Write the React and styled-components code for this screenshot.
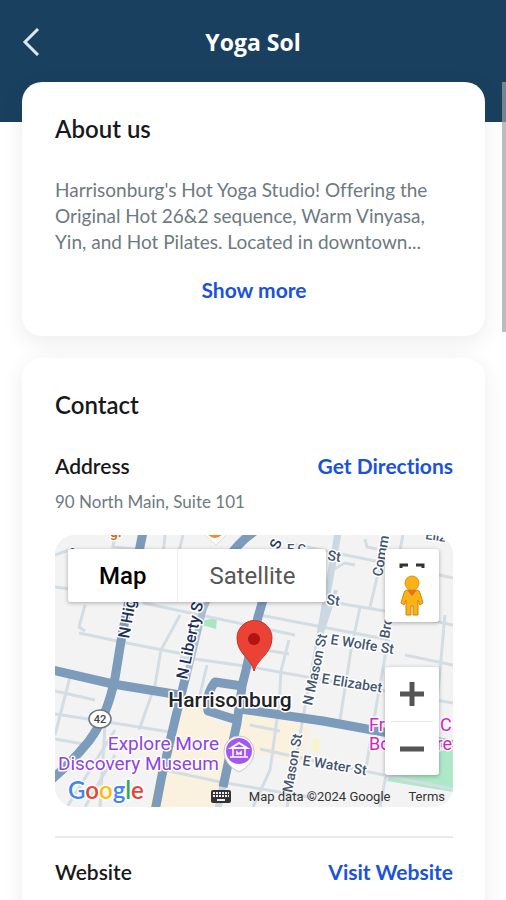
import React from 'react'
import styled, { createGlobalStyle } from 'styled-components'

const GlobalStyle = createGlobalStyle`
  * {
    box-sizing: border-box;
  }
  body {
    margin: 0;
    background: #fff;
    font-family: Lato, 'Open Sans', sans-serif;
    font-variant-ligatures: none;
  }
  button {
    border: 0;
    padding: 0;
    background: none;
    font-family: inherit;
    cursor: pointer;
  }
  h1, h2, h3, p {
    margin: 0;
  }
`

const Screen = styled.div`
  height: 100vh;
  overflow: hidden;
`

const Header = styled.header`
  display: grid;
  grid-template-columns: 40px 1fr 40px;
  align-items: center;
  height: 122px;
  padding: 0 11px 38px;
  background: #1a4060;
`

const BackButton = styled.button`
  display: flex;
  justify-content: center;
  color: #dce6ee;
`

const Title = styled.h1`
  font-family: 'Open Sans', sans-serif;
  font-size: 23px;
  font-weight: 700;
  line-height: 32px;
  text-align: center;
  color: #fff;
`

const Main = styled.main`
  display: flex;
  flex-direction: column;
  gap: 22px;
  margin-top: -40px;
  padding: 0 21px 0 22px;
`

const Card = styled.section`
  padding: 31px 32px 33px 33px;
  border-radius: 20px;
  background: #fff;
  box-shadow: 0 6px 22px rgba(40, 40, 70, 0.09);
`

const CardTitle = styled.h2`
  margin-bottom: 32px;
  font-size: 24px;
  font-weight: 600;
  line-height: 32px;
  color: #17191b;
`

const Description = styled.p`
  margin-bottom: 22px;
  font-size: 19px;
  line-height: 26px;
  color: #6d7a80;
`

const ShowMore = styled.button`
  display: block;
  margin: 0 auto;
  font-size: 21px;
  font-weight: 700;
  line-height: 26px;
  color: #1a52dc;
`

const Row = styled.div`
  display: flex;
  justify-content: space-between;
  font-size: 21px;
  line-height: 26px;
`

const RowTitle = styled.h3`
  font-size: 21px;
  font-weight: 600;
  color: #17191b;
`

const RowLink = styled.a`
  font-weight: 700;
  color: #1a52dc;
  text-decoration: none;
`

const AddressText = styled.p`
  margin: 11px 0 21px;
  font-size: 17px;
  line-height: 24px;
  color: #6d7a80;
`

const Divider = styled.hr`
  height: 2px;
  margin: 29px 0 21px;
  border: 0;
  background: #e9eaec;
`

const ScrollThumb = styled.div`
  position: fixed;
  top: 82px;
  right: 0;
  width: 4px;
  height: 250px;
  background: rgba(160, 160, 160, 0.7);
`

/* map */

const MapBox = styled.div`
  position: relative;
  height: 272px;
  overflow: hidden;
  border-radius: 20px;
  background: #f4f3f4;
  font-family: Roboto, sans-serif;
`

const MapCanvas = styled.svg`
  display: block;
  width: 100%;
  height: 100%;
`

const MapTypes = styled.div`
  position: absolute;
  top: 14px;
  left: 13px;
  display: flex;
  border-radius: 3px;
  background: #fff;
  box-shadow: 0 1px 4px rgba(0, 0, 0, 0.3);
`

const MapType = styled.button`
  height: 53px;
  padding: 0 31px;
  font-size: 24px;
  font-weight: ${props => props.$active ? 500 : 400};
  color: ${props => props.$active ? '#000' : '#565656'};
  & + & {
    border-left: 1px solid #eee;
  }
`

const Controls = styled.div`
  position: absolute;
  top: 14px;
  right: 14px;
  bottom: 32px;
  display: flex;
  flex-direction: column;
  justify-content: space-between;
`

const ControlGroup = styled.div`
  display: flex;
  flex-direction: column;
  align-items: center;
  width: 54px;
  border-radius: 3px;
  background: #fff;
  box-shadow: 0 1px 4px rgba(0, 0, 0, 0.3);
`

const Control = styled.button`
  display: flex;
  align-items: center;
  justify-content: center;
  width: 42px;
  height: ${props => props.$height || 54}px;
  border-top: ${props => props.$line ? '1px solid #e6e6e6' : '0'};
`

const MapFooter = styled.div`
  position: absolute;
  left: 13px;
  right: 8px;
  bottom: 0;
  display: flex;
  align-items: flex-end;
  justify-content: space-between;
  font-size: 13px;
  line-height: 20px;
  color: #333;
`

const GoogleLogo = styled.span`
  font-family: Lato, sans-serif;
  font-size: 24px;
  font-weight: 600;
  line-height: 34px;
  -webkit-text-stroke: 3px #fff;
  paint-order: stroke fill;
`

const Letter = styled.span`
  color: ${props => props.$color};
`

const Legal = styled.div`
  display: flex;
  align-items: center;
  gap: 18px;
`

const TermsLink = styled.a`
  color: inherit;
  text-decoration: none;
`

const MapText = styled.text`
  font-size: ${props => props.$size || 13}px;
  font-weight: ${props => props.$weight || 500};
  fill: ${props => props.$fill || '#43566f'};
  stroke: #fff;
  stroke-width: 3px;
  stroke-linejoin: round;
  paint-order: stroke;
`

const smallStreets = [
  'M0 20 L14 15',
  'M0 52 L16 54',
  'M24 98 L72 108 L128 119',
  'M88 68 L240 100',
  'M30 70 L24 92 L30 96',
  'M60 0 L58 12 L90 15',
  'M128 0 L116 50',
  'M125 80 L106 115 L100 150 L84 195',
  'M110 0 L108 20',
  'M0 156 L40 165',
  'M15 142 L0 200',
  'M0 179 L40 185 L115 197',
  'M0 204 L28 209',
  'M125 122 L190 131 L398 168',
  'M152 130 L145 160',
  'M205 80 L335 105',
  'M234 105 L226 136 L224 170 L215 235 L198 272',
  'M210 115 L234 119',
  'M192 50 L260 66',
  'M205 214 L260 226 L398 254',
  'M195 190 L225 196',
  'M110 235 L165 247 L260 263',
  'M50 190 L45 272',
  'M30 272 L60 220',
  'M12 272 L60 195',
  'M232 8 L330 28 L398 43',
  'M270 66 L330 76 L398 90',
  'M305 72 L296 115 L285 185',
  'M325 30 L315 72',
  'M390 80 L380 190',
  'M310 4 L312 12 L322 14',
  'M277 35 L290 28 L300 30',
  'M332 110 L318 190 L310 240',
  'M348 0 L344 20',
  'M350 120 L398 130',
  'M331 240 L325 272',
  'M262 105 L245 200 L232 272',
]

const mainRoads = [
  'M88 -3 L67 100 L60 143 Q52 182 34 206 Q18 226 -5 246',
  'M-3 135 L58 149 L125 160',
  'M200 -4 Q182 8 170 28',
  'M131 140 L120 185 L107 240 L100 276',
  'M213 48 L203 82 L191 135 L187 151 L160 147 Q150 160 153 176 L182 185',
  'M187 152 L182 188 L168 252',
  'M185 174 L268 186 L400 210',
]

function StreetMap() {
  return (
    <MapCanvas viewBox="0 0 398 272" preserveAspectRatio="xMidYMid slice" role="img" aria-label="Map of Harrisonburg">
      <rect width="398" height="272" fill="#f4f3f4" />
      <path d="M128 166 L153 170 L157 186 L182 190 L166 272 L92 272 L104 236Z" fill="#faf1df" />
      <path d="M188 178 L256 190 L248 228 L178 214Z" fill="#faf1df" />
      <path d="M258 202 L266 204 L264 218 L256 216Z" fill="#f8f3cf" />
      <path d="M338 232 L398 212 L398 257 L332 246Z" fill="#aee8c8" />
      <path d="M150 85 L162 83 L161 94 L147 90Z" fill="#a9e6c2" />
      <g fill="none" stroke="#d3dde4" strokeWidth="3">
        {smallStreets.map(d => <path key={d} d={d} />)}
      </g>
      <g fill="none" stroke="#cbd7e1" strokeWidth="7">
        <path d="M283 -2 L272 60 L264 105" />
        <path d="M281 55 L268 95" strokeWidth="4" />
        <path d="M165 34 L148 75 L131 145" stroke="#a9bed5" />
        <path d="M168 250 L163 274" />
      </g>
      <g fill="none" stroke="#7d9bbb" strokeWidth="9" strokeLinejoin="round">
        {mainRoads.map(d => <path key={d} d={d} />)}
      </g>

      <path d="M145 -4 L175 -4 L161 10Z" fill="#fff" stroke="#ddd" />
      <circle cx="160" cy="-6" r="9" fill="#f28a2c" />
      <MapText x="55" y="2" $size={14} $fill="#d9601a">gr</MapText>
      <MapText x="14" y="20" $size={12}>o</MapText>
      <MapText transform="translate(224 15) rotate(-70)" $fill="#2b3c63" $size={15}>S</MapText>
      <MapText x="232" y="18">E C</MapText>
      <MapText transform="translate(272 25) rotate(8)" $size={14}>St</MapText>
      <MapText transform="translate(271 69) rotate(8)" $size={14}>St</MapText>
      <MapText x="370" y="4" transform="rotate(8 370 4)">Eliz</MapText>
      <MapText transform="translate(74 104) rotate(-80)" $fill="#1d2f5c" $size={16}>N High</MapText>
      <MapText transform="translate(132 145) rotate(-78)" $fill="#1d2f5c" $size={16}>N Liberty St</MapText>
      <MapText transform="translate(257 171) rotate(-78)" $size={14}>N Mason St</MapText>
      <MapText transform="translate(237 258) rotate(-80)" $size={14}>Mason St</MapText>
      <MapText transform="translate(327 42) rotate(-80)" $size={14}>Comm</MapText>
      <MapText transform="translate(334 104) rotate(-80)" $size={14}>Bro</MapText>
      <MapText transform="translate(275 109) rotate(9)" $size={14}>E Wolfe St</MapText>
      <MapText transform="translate(266 148) rotate(9)" $size={14}>E Elizabet</MapText>
      <MapText transform="translate(247 230) rotate(9)" $size={14}>E Water St</MapText>
      <MapText x="314" y="196" $size={18} $weight={400} $fill="#d91fc0">Fr</MapText>
      <MapText x="385" y="196" $size={18} $weight={400} $fill="#d91fc0">C</MapText>
      <MapText x="314" y="215" $size={18} $weight={400} $fill="#d91fc0">Bo</MapText>
      <MapText x="397" y="215" textAnchor="end" $size={18} $weight={400} $fill="#d91fc0">re</MapText>

      <ellipse cx="45" cy="184" rx="11" ry="9" fill="#fff" stroke="#6f7680" strokeWidth="1.5" />
      <MapText x="45" y="188" textAnchor="middle" $size={11} $fill="#444">42</MapText>

      <MapText x="164" y="215" textAnchor="end" $size={19} $weight={400} $fill="#8f42e6">Explore More</MapText>
      <MapText x="164" y="235" textAnchor="end" $size={19} $weight={400} $fill="#8f42e6">Discovery Museum</MapText>
      <path d="M184 237 C174 232 169 225 169 216 A15 15 0 0 1 199 216 C199 225 194 232 184 237Z" fill="#fff" stroke="#c9bfd6" />
      <circle cx="184" cy="216" r="13" fill="#a556f2" />
      <path d="M176 213 L184 208 L192 213Z" fill="none" stroke="#fff" strokeWidth="2" />
      <path d="M178 214 V222 M190 214 V222 M175 222 H193 M182 220 V217 L184 219 L186 217 V220" fill="none" stroke="#fff" strokeWidth="1.5" />

      <MapText x="175" y="172" textAnchor="middle" $size={21} $fill="#1f2226">Harrisonburg</MapText>
      <path d="M199 136 C197 124 182 119 182 103 A17 17 0 0 1 217 103 C217 119 202 124 199 136Z" fill="#ea4335" stroke="#c5352a" />
      <circle cx="199" cy="104" r="6" fill="#b31412" />
    </MapCanvas>
  )
}

function Pegman() {
  return (
    <svg width="24" height="42" viewBox="0 0 24 42" aria-hidden="true">
      <path d="M7 15 H17 Q19 15 20 18 L23 28 L20 30 L18 25 V40 H13 V31 H11 V40 H6 V25 L4 30 L1 28 L4 18 Q5 15 7 15Z" fill="#fbb216" stroke="#c98412" />
      <path d="M7 15 H17 L12 21Z" fill="#e2711d" />
      <circle cx="12" cy="8" r="7" fill="#fbb216" stroke="#d69316" />
    </svg>
  )
}

function LocationMap() {
  return (
    <MapBox>
      <StreetMap />
      <MapTypes>
        <MapType type="button" $active>Map</MapType>
        <MapType type="button">Satellite</MapType>
      </MapTypes>
      <Controls>
        <ControlGroup>
          <Control type="button" $height={20} aria-label="Toggle fullscreen">
            <svg width="26" height="20" viewBox="0 0 26 20" fill="none" stroke="#333" strokeWidth="3">
              <path d="M2 19 V16 H9 M17 16 H24 V19" />
            </svg>
          </Control>
          <Control type="button" $height={53} aria-label="Street View">
            <Pegman />
          </Control>
        </ControlGroup>
        <ControlGroup>
          <Control type="button" aria-label="Zoom in">
            <svg width="24" height="24" viewBox="0 0 24 24" stroke="#555" strokeWidth="5">
              <path d="M0 12 H24 M12 0 V24" />
            </svg>
          </Control>
          <Control type="button" $line aria-label="Zoom out">
            <svg width="24" height="24" viewBox="0 0 24 24" stroke="#555" strokeWidth="5">
              <path d="M0 12 H24" />
            </svg>
          </Control>
        </ControlGroup>
      </Controls>
      <MapFooter>
        <GoogleLogo>
          <Letter $color="#4285f4">G</Letter>
          <Letter $color="#ea4335">o</Letter>
          <Letter $color="#fbbc05">o</Letter>
          <Letter $color="#4285f4">g</Letter>
          <Letter $color="#34a853">l</Letter>
          <Letter $color="#ea4335">e</Letter>
        </GoogleLogo>
        <Legal>
          <svg width="20" height="14" viewBox="0 0 20 14" aria-hidden="true">
            <rect width="20" height="13" rx="2" fill="#333" />
            <path d="M2 3 H18 M2 6 H18" stroke="#eee" strokeWidth="2" strokeDasharray="2 1" />
            <path d="M6 10 H14" stroke="#eee" strokeWidth="2" />
          </svg>
          <span>Map data ©2024 Google</span>
          <TermsLink href="#terms">Terms</TermsLink>
        </Legal>
      </MapFooter>
    </MapBox>
  )
}

function App() {
  return (
    <Screen>
      <GlobalStyle />
      <Header>
        <BackButton type="button" aria-label="Back">
          <svg width="18" height="28" viewBox="0 0 18 28" fill="none" stroke="currentColor" strokeWidth="3">
            <path d="M16 1 L3 14 L16 27" />
          </svg>
        </BackButton>
        <Title>Yoga Sol</Title>
      </Header>
      <Main>
        <Card>
          <CardTitle>About us</CardTitle>
          <Description>
            Harrisonburg's Hot Yoga Studio! Offering the Original Hot 26&amp;2 sequence, Warm Vinyasa, Yin, and Hot Pilates. Located in downtown...
          </Description>
          <ShowMore type="button">Show more</ShowMore>
        </Card>
        <Card>
          <CardTitle>Contact</CardTitle>
          <Row>
            <RowTitle>Address</RowTitle>
            <RowLink href="#directions">Get Directions</RowLink>
          </Row>
          <AddressText>90 North Main, Suite 101</AddressText>
          <LocationMap />
          <Divider />
          <Row>
            <RowTitle>Website</RowTitle>
            <RowLink href="#website">Visit Website</RowLink>
          </Row>
        </Card>
      </Main>
      <ScrollThumb />
    </Screen>
  )
}

export default App
